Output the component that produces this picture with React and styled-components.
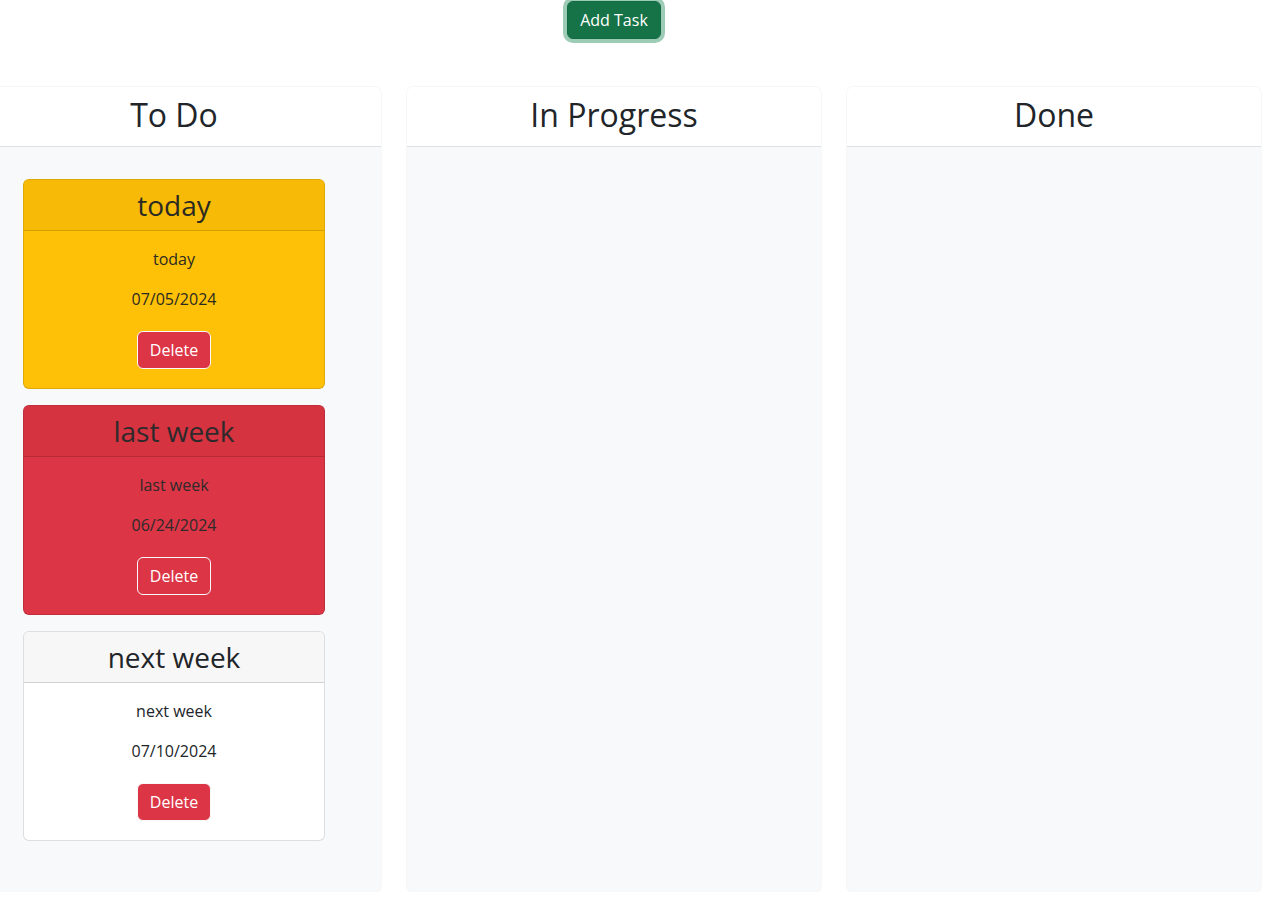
import React from "react";
import styled, { createGlobalStyle } from "styled-components";

const GlobalStyle = createGlobalStyle`
  html, body {
    margin: 0;
    padding: 0;
    background: #fff;
    color: #212529;
    font-family: "Open Sans", "Liberation Sans", sans-serif;
    font-size: 16px;
    line-height: 1.5;
    overflow-x: hidden;
  }
  * { box-sizing: border-box; }
`;

const tones = {
  warning: { body: "#ffc107", head: "#f7bb07", text: "#2b2a22" },
  danger: { body: "#dc3545", head: "#d5333f", text: "#2e2a2b" },
  light: { body: "#ffffff", head: "#f7f7f7", text: "#212529" },
};

const Page = styled.div`
  width: 1294px;
  margin-left: -33px;
  display: flex;
  flex-direction: column;
  align-items: center;
`;

const AddButton = styled.button`
  margin-top: 1px;
  margin-bottom: 48px;
  height: 38px;
  padding: 6px 12px;
  font-family: inherit;
  font-size: 16px;
  line-height: 24px;
  color: #fff;
  background: #157347;
  border: 1px solid #146c43;
  border-radius: 6px;
  box-shadow: 0 0 0 4px rgba(60, 153, 110, 0.5);
  cursor: pointer;
`;

const Board = styled.div`
  display: flex;
  gap: 26px;
  width: 100%;
`;

const Column = styled.section`
  flex: 0 0 414px;
  min-height: 805px;
  display: flex;
  flex-direction: column;
  background: #f8f9fa;
  box-shadow: 0 0 0 1px rgba(0, 0, 0, 0.035);
  border-radius: 6px;
  overflow: hidden;
`;

const ColumnHead = styled.header`
  height: 60px;
  padding-bottom: 2px;
  display: flex;
  align-items: center;
  justify-content: center;
  background: #fff;
  border-bottom: 1px solid #dee2e6;
`;

const ColumnTitle = styled.h2`
  margin: 0;
  font-size: 32px;
  font-weight: 400;
  line-height: 1.2;
  color: #212529;
`;

const ColumnBody = styled.div`
  flex: 1;
  display: flex;
  flex-direction: column;
  gap: 16px;
  padding: 32px 0 48px 56px;
`;

const TaskCard = styled.article`
  width: 302px;
  background: ${({ $tone }) => tones[$tone].body};
  border: 1px solid rgba(0, 0, 0, 0.13);
  border-radius: 6px;
  overflow: hidden;
  color: ${({ $tone }) => tones[$tone].text};
`;

const TaskHead = styled.div`
  padding: 8px 16px;
  background: ${({ $tone }) => tones[$tone].head};
  border-bottom: 1px solid rgba(0, 0, 0, 0.15);
  text-align: center;
`;

const TaskTitle = styled.h3`
  margin: 0;
  font-size: 28px;
  font-weight: 400;
  line-height: 34px;
`;

const TaskBody = styled.div`
  padding: 16px 16px 19px;
  display: flex;
  flex-direction: column;
  align-items: center;
  text-align: center;
`;

const TaskText = styled.p`
  margin: 0 0 16px;
  font-size: 16px;
  line-height: 24px;
`;

const DeleteButton = styled.button`
  margin-top: 4px;
  height: 38px;
  padding: 6px 12px;
  font-family: inherit;
  font-size: 16px;
  line-height: 24px;
  color: #fff;
  background: #dc3545;
  border: 1px solid #f8f9fa;
  border-radius: 6px;
  cursor: pointer;
`;

const tasks = [
  { id: 1, title: "today", text: "today", date: "07/05/2024", tone: "warning" },
  { id: 2, title: "last week", text: "last week", date: "06/24/2024", tone: "danger" },
  { id: 3, title: "next week", text: "next week", date: "07/10/2024", tone: "light" },
];

const columns = [
  { id: "todo", title: "To Do", items: tasks },
  { id: "progress", title: "In Progress", items: [] },
  { id: "done", title: "Done", items: [] },
];

export default function App() {
  return (
    <>
      <GlobalStyle />
      <Page>
        <AddButton>Add Task</AddButton>
        <Board>
          {columns.map((col) => (
            <Column key={col.id}>
              <ColumnHead>
                <ColumnTitle>{col.title}</ColumnTitle>
              </ColumnHead>
              <ColumnBody>
                {col.items.map((t) => (
                  <TaskCard key={t.id} $tone={t.tone}>
                    <TaskHead $tone={t.tone}>
                      <TaskTitle>{t.title}</TaskTitle>
                    </TaskHead>
                    <TaskBody>
                      <TaskText>{t.text}</TaskText>
                      <TaskText>{t.date}</TaskText>
                      <DeleteButton>Delete</DeleteButton>
                    </TaskBody>
                  </TaskCard>
                ))}
              </ColumnBody>
            </Column>
          ))}
        </Board>
      </Page>
    </>
  );
}
